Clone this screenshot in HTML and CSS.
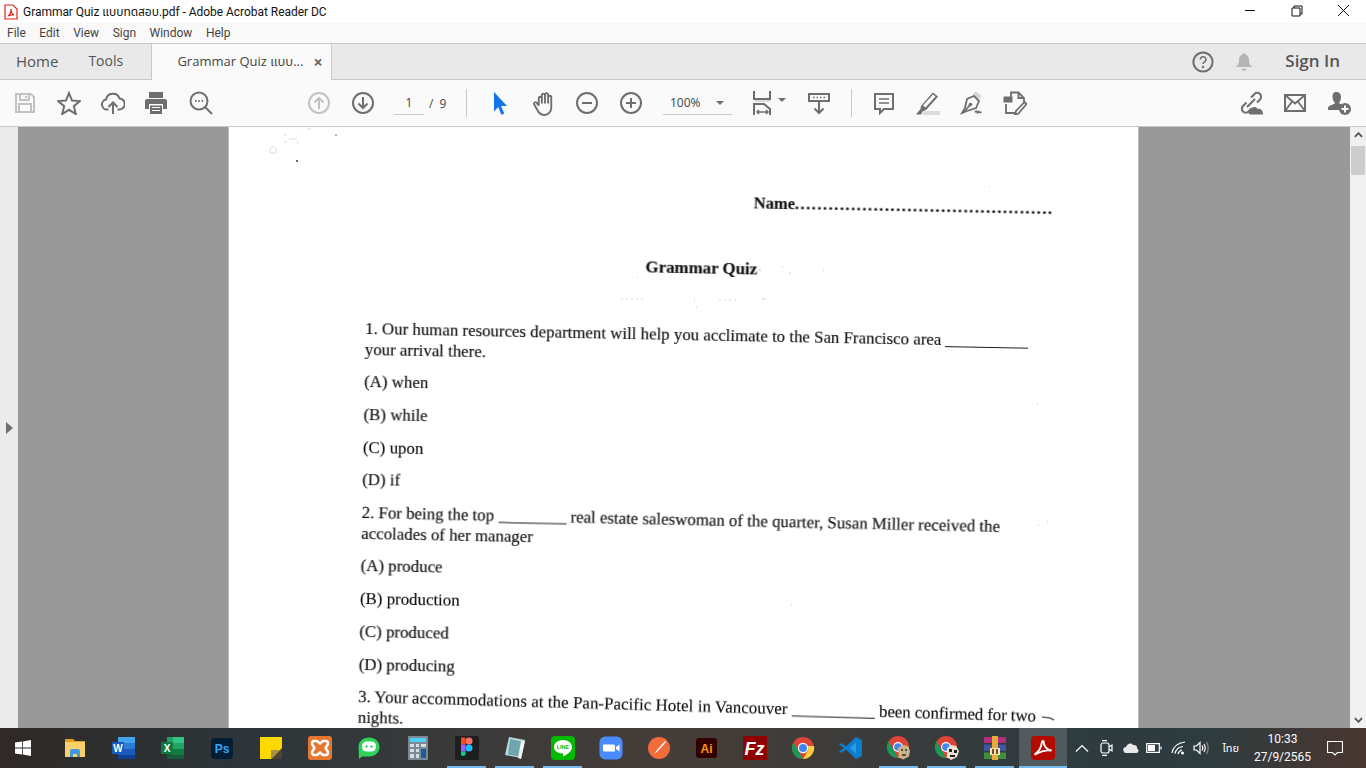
FILE: index.html
```html
<!DOCTYPE html>
<html lang="en">
<head>
<meta charset="utf-8">
<title>Grammar Quiz</title>
<link rel="stylesheet" href="styles.css">
</head>
<body>
<div class="app">
  <header class="titlebar">
    <svg class="title-logo" viewBox="0 0 14 16"><path class="pdf-page" d="M1 1h8l4 4v10H1z"/><path class="pdf-mark" d="M4 12c2-1 3-4 3-7 0 3 1 5 3 6-2-.5-4 0-6 1z"/></svg>
    <span class="title-text">Grammar Quiz <span lang="th" class="thai">แบบทดสอบ</span>.pdf - Adobe Acrobat Reader DC</span>
    <div class="winctl">
      <svg class="wbtn" viewBox="0 0 46 23"><path d="M17 10.500h10"/></svg>
      <svg class="wbtn" viewBox="0 0 46 23"><path d="M18 8h8v8h-8zM20 8V6h8v8h-2"/></svg>
      <svg class="wbtn" viewBox="0 0 46 23"><path d="M18 5l11 11M29 5L18 16"/></svg>
    </div>
  </header>
  <nav class="menubar">
    <span>File</span><span>Edit</span><span>View</span><span>Sign</span><span>Window</span><span>Help</span>
  </nav>
  <div class="tabbar">
    <span class="tab-link tab-home">Home</span>
    <span class="tab-link tab-tools">Tools</span>
    <div class="tab-doc"><span class="tab-doc-name">Grammar Quiz <span lang="th" class="thai">แบบ</span>...</span><span class="tab-close">×</span></div>
    <svg class="top-ic ic" viewBox="0 0 24 24"><circle cx="12" cy="12" r="9.600"/><path class="thin" d="M9.300 9.500a2.800 2.800 0 1 1 4.200 2.400c-1 .6-1.500 1.100-1.500 2.100"/><circle class="dot" cx="12" cy="17" r="1.200"/></svg>
    <svg class="top-bell" viewBox="0 0 24 24"><path d="M12 1.500c1 0 1.600.7 1.600 1.500 3 .8 4.400 3.300 4.400 6.500 0 4 1 6.500 4 8.500H2c3-2 4-4.500 4-8.500 0-3.200 1.400-5.700 4.400-6.500 0-.8.6-1.500 1.600-1.500z"/><path d="M9 20h6a3 2.500 0 0 1-6 0z"/></svg>
    <span class="signin">Sign In</span>
  </div>
  <div class="toolbar">
    <div class="tbtn"><svg class="ic off" viewBox="0 0 24 24"><path d="M3 3h15l3 3v15H3z"/><path d="M7 3v6h9V3M13 5v2M6 21v-8h12v8"/></svg></div>
    <div class="tbtn"><svg class="ic" viewBox="0 0 24 24"><path d="M12 2l3 7.500 8 .6-6.200 5.100 2 7.800L12 18.800 5.200 23l2-7.800L1 10.100l8-.6z"/></svg></div>
    <div class="tbtn"><svg class="ic" viewBox="0 0 24 24"><path d="M7.500 18.500H6a5 5 0 0 1-1-9.900A7 7 0 0 1 18.500 7.500a5.500 5.500 0 0 1-.5 11h-1.500"/><path d="M12 23V11.500M7.500 16l4.500-4.500 4.500 4.500"/></svg></div>
    <div class="tbtn shift-l"><svg class="solid" viewBox="0 0 24 24"><path d="M5 1h14v6H5z"/><path d="M3 8h18a2 2 0 0 1 2 2v8h-4v-5H5v5H1v-8a2 2 0 0 1 2-2z"/><path d="M6 14.500h12V23H6zM8 17h8v-1H8zM8 20h8v-1H8z" fill-rule="evenodd"/></svg></div>
    <div class="tbtn shift-r"><svg class="ic" viewBox="0 0 24 24"><circle cx="10" cy="10" r="8.500"/><path d="M16 16l7 7"/><path class="thick-dots" d="M6 10h1.500M9.300 10h1.500M12.600 10h1.500"/></svg></div>
    <div class="tbtn nav-first"><svg class="ic off" viewBox="0 0 24 24"><circle cx="12" cy="12" r="10"/><path d="M12 18V7M7.500 11.500L12 7l4.500 4.500"/></svg></div>
    <div class="tbtn"><svg class="ic" viewBox="0 0 24 24"><circle cx="12" cy="12" r="10"/><path d="M12 6v11M7.500 12.500L12 17l4.500-4.500"/></svg></div>
    <div class="pagebox">1</div>
    <div class="pagecount">/ 9</div>
    <div class="sep sep-a"></div>
    <div class="tbtn"><svg class="blue" viewBox="0 0 24 24"><path d="M6 1l13 14h-6l3.300 7.500-3 1.300L10.300 16 6 20.500z"/></svg></div>
    <div class="tbtn"><svg class="ic ic-hand" viewBox="0 0 24 24"><path class="mid" d="M6.500 14V7a1.500 1.500 0 0 1 3 0v5M9.500 12V4a1.500 1.500 0 0 1 3 0v8M12.500 12V3.500a1.500 1.500 0 0 1 3 0V12M15.500 12V6a1.500 1.500 0 0 1 3 0v10c0 4-3 7-6.500 7-3.300 0-5.500-1.800-7-5l-3-5.300c-.7-1.400 1.300-2.700 2.400-1.500L6.500 14"/></svg></div>
    <div class="tbtn pull-l"><svg class="ic" viewBox="0 0 24 24"><circle cx="12" cy="12" r="10"/><path d="M7 12h10"/></svg></div>
    <div class="tbtn"><svg class="ic" viewBox="0 0 24 24"><circle cx="12" cy="12" r="10"/><path d="M7 12h10M12 7v10"/></svg></div>
    <div class="zoombox"><span>100%</span><i class="caret"></i></div>
    <div class="tbtn fit"><svg class="ic" viewBox="0 0 24 24"><path d="M3 0v8h16V0"/><path class="band" d="M4 9h15v2H4z"/><path d="M3 24V13h10l6 5v6"/><path class="thin" d="M6 21h11M8 19l-2 2 2 2M15 19l2 2-2 2"/></svg><i class="caret caret-fit"></i></div>
    <div class="tbtn read"><svg class="ic" viewBox="0 0 24 24"><path d="M2 3h20v7H2z"/><path class="thin" d="M6 6.500h1.500M9.500 6.500H11M13 6.500h1.500M16.500 6.500H18"/><path d="M12 10v12M7.500 17.500L12 22l4.500-4.500"/></svg></div>
    <div class="sep sep-b"></div>
    <div class="tbtn"><svg class="ic" viewBox="0 0 24 24"><path d="M3 3h18v15H12l-4 4v-4H3z"/><path class="thin" d="M7 8h10M7 12h10"/></svg></div>
    <div class="tbtn"><svg class="solid" viewBox="0 0 24 24"><path class="pale" d="M7 20h17v4H7z"/><path d="M17 1.500l5 4-2 2.500-10 11-3 1-2 3.500H0l4.500-5.500.5-3L15 3.500z"/><path class="hole" d="M17 3.500l2.500 2-10 11-2.500-2z"/></svg></div>
    <div class="tbtn"><svg class="ic" viewBox="0 0 24 24"><path class="band-line" d="M14 2l6 5"/><path class="mid" d="M14 5l5 5-3 7-9 3-5 2 3-5 2-9z"/><path class="mid" d="M3 22l7-8"/><circle class="dot" cx="10.500" cy="13.500" r="1.800"/><path class="thin" d="M15 21.500c1-2 2-2 2-.5s1 1 1.500-.2.800.8 1.200.7 1-.5 2 0"/></svg></div>
    <div class="tbtn pull-l"><svg class="ic" viewBox="0 0 24 24"><path class="mid" d="M8 6V1.500h7.500L21 7v4M15.500 1.500V7H21M3 13v9h9"/><path class="fillblk" d="M.5 5.500h9v6h-9z"/><path class="mid" d="M21.500 11l2 2-8 9.500-3.500 1 1-3.500z"/></svg></div>
    <div class="toolbar-right">
      <div class="tbtn"><svg class="ic" viewBox="0 0 24 24"><path d="M7.500 11.500L4 15a3.800 3.800 0 0 0 5.500 5.500l3-3M12 6.500L15.500 3A3.800 3.800 0 0 1 21 8.500l-3 3M8 16l8-8"/><path class="fillblk" d="M11.500 23.500c-2.500 0-3-3.500 0-4.500.5-3 5.500-4.500 7-1 3.500-1 5.500 2 5.500 5.500z"/></svg></div>
      <div class="tbtn"><svg class="ic" viewBox="0 0 24 24"><path d="M2 4h20v16H2z"/><path class="mid" d="M2 4l10 8.500L22 4M2 20l7.500-10M22 20l-7.500-10"/></svg></div>
      <div class="tbtn"><svg class="solid" viewBox="0 0 24 24"><path d="M9.500 1c3 0 4.500 2.300 4.500 5s-1.200 4.500-1.700 5.500v1c1.500.6 2.700 1 3.700 1.500a7 7 0 0 0-3 5H1v-2.500c1-2 5-3 6.800-4v-1C7 11 5.500 9 5.500 6S6.500 1 9.500 1z"/><circle cx="18" cy="18" r="6"/><path class="hole" d="M17 14.500h2V17h2.500v2H19v2.500h-2V19h-2.500v-2H17z"/></svg></div>
    </div>
  </div>
  <main class="workspace">
    <aside class="sidepanel"><i class="side-arrow"></i></aside>
    <div class="canvas">
      <article class="page">
        <svg class="specks" viewBox="0 0 910 601"><circle class="sp-dark" cx="68" cy="34" r="1"/><circle class="sp-dark" cx="107" cy="8" r=".7"/><path class="sp-light" d="M41 22l3-3 3 3v4h-6zM55 8h3M55 15h3M60 12h8M69 14v3M69 5h1M78 2h4"/><path class="sp-mid" d="M408 150h1M529 143h3M553 140h1M560 146h2M594 143h1M465 172h1M533 172h3M465 175h1M467 180h1M808 277h1M562 478h1M818 395h1M760 60h1M809 398h1"/><path class="sp-faint" d="M392 172h24M490 173h20"/><path class="sp-dark-line" d="M813 590l8 1 4 2"/></svg>
        <div class="sheet">
          <p class="name-line"><b>Name</b><b class="dots">..............................................</b></p>
          <h1 class="quiz-title">Grammar Quiz</h1>
          <p class="ln first">1. Our human resources department will help you acclimate to the San Francisco area <i class="blank b1"></i></p>
          <p class="ln">your arrival there.</p>
          <p class="opt">(A) when</p>
          <p class="opt">(B) while</p>
          <p class="opt">(C) upon</p>
          <p class="opt">(D) if</p>
          <p class="ln q q2">2. For being the top <i class="blank b2"></i> real estate saleswoman of the quarter, Susan Miller received the</p>
          <p class="ln">accolades of her manager</p>
          <p class="opt">(A) produce</p>
          <p class="opt">(B) production</p>
          <p class="opt">(C) produced</p>
          <p class="opt">(D) producing</p>
          <p class="ln q q3">3. Your accommodations at the Pan-Pacific Hotel in Vancouver <i class="blank b1"></i> <span class="q3-tail">been confirmed for two</span></p>
          <p class="ln">nights.</p>
        </div>
      </article>
    </div>
    <div class="scrollbar">
      <svg class="sb-arrow" viewBox="0 0 10 6"><path d="M1 5l4-4 4 4"/></svg>
      <div class="sb-thumb"></div>
      <svg class="sb-arrow sb-down" viewBox="0 0 10 6"><path d="M1 1l4 4 4-4"/></svg>
    </div>
  </main>
  <footer class="taskbar">
    <div class="start"><svg class="win" viewBox="0 0 16 16"><path d="M0 2.600l7-1v6H0zM7.800 1.400L16 0v7.600H7.800zM0 8.400h7v6l-7-1zM7.800 8.400H16V16l-8.200-1.400z"/></svg></div>
    <div class="apps">
      <div class="app-btn"><svg class="ti" viewBox="0 0 24 24"><path fill="#e0a11c" d="M2 3h8l2 2h10v4H2z"/><path fill="#f8cf6a" d="M2 6h20v15H2z"/><path fill="#3f9be0" d="M7 21v-6a2 2 0 0 1 2-2h6a2 2 0 0 1 2 2v6h-3v-3h-4v3z"/></svg></div>
      <div class="app-btn"><svg class="ti" viewBox="0 0 24 24"><path fill="#41a5ee" d="M6 1h17v6H6z"/><path fill="#2b7cd3" d="M6 7h17v6H6z"/><path fill="#185abd" d="M6 13h17v6H6z"/><path fill="#103f91" d="M6 19h17v4H6z"/><rect fill="#185abd" x="0" y="6" width="12" height="12"/><text class="tt tt-w" x="6" y="15.500">W</text></svg></div>
      <div class="app-btn"><svg class="ti" viewBox="0 0 24 24"><path fill="#33c481" d="M12 1h11v6H12z"/><path fill="#21a366" d="M6 1h6v6H6zM12 7h11v6H12z"/><path fill="#107c41" d="M6 7h6v6H6zM12 13h11v6H12z"/><path fill="#185c37" d="M6 13h6v10H6zM12 19h11v4H12z"/><rect fill="#0f7b3f" x="0" y="6" width="12" height="12"/><text class="tt tt-w" x="6" y="15.500">X</text></svg></div>
      <div class="app-btn"><svg class="ti" viewBox="0 0 24 24"><rect fill="#001e36" x="1" y="2" width="22" height="21" rx="4"/><text class="tt tt-ps" x="12" y="17">Ps</text></svg></div>
      <div class="app-btn"><svg class="ti" viewBox="0 0 24 24"><path fill="#ffd800" d="M1 1h22v22H1z"/><path fill="#4b4438" d="M12 23L23 12v11z"/><path fill="#a8924a" d="M12 23v-9h9z"/></svg></div>
      <div class="app-btn"><svg class="ti" viewBox="0 0 24 24"><rect fill="#e5772f" x="0" y="0" width="24" height="24" rx="3"/><path fill="none" stroke="#fff" stroke-width="2.400" stroke-linejoin="round" d="M6 5h3l3 2.500L15 5h3c2 0 2 2 2 3l-2.500 4 2.500 4c0 1 0 3-2 3h-3l-3-2.500L9 19H6c-2 0-2-2-2-3l2.500-4L4 8c0-1 0-3 2-3z"/></svg></div>
      <div class="app-btn"><svg class="ti" viewBox="0 0 24 24"><path fill="#2fd35a" d="M12 1.500c6 0 10.500 4 10.500 9.500S18 20.500 12 20.500H5L2 23l-.5-12C1.500 5.500 6 1.500 12 1.500z"/><rect fill="#fff" x="5" y="5.500" width="14" height="10" rx="4.500"/><circle fill="#2fd35a" cx="9.500" cy="10.500" r="1.200"/><circle fill="#2fd35a" cx="14.500" cy="10.500" r="1.200"/></svg></div>
      <div class="app-btn"><svg class="ti" viewBox="0 0 24 24"><rect fill="#7b8a96" x="2" y="0" width="20" height="24" rx="1"/><path fill="#4fd0f2" d="M4 2h16v4H4z"/><path fill="#d6dde3" d="M4 8h4v3H4zM10 8h3v3h-3zM15 8h5v3h-5zM4 13h4v3H4zM10 13h3v3h-3zM4 18h4v4H4zM10 18h3v4h-3z"/><path fill="#1c5c9c" d="M15 13h5v9h-5z"/></svg></div>
      <div class="app-btn underlined"><svg class="ti" viewBox="0 0 24 24"><rect fill="#1e1e1e" x="0" y="0" width="24" height="24" rx="2"/><circle fill="#ff7262" cx="14" cy="5" r="3.500"/><path fill="#f24e1e" d="M6 1.500h4.500v7H6z"/><circle fill="#1abcfe" cx="14" cy="12" r="3.500"/><path fill="#a259ff" d="M6 8.500h4.500v7H6z"/><path fill="#0acf83" d="M6 15.500h4.500v3.500a3.500 3.500 0 0 1-4.500 0z"/></svg></div>
      <div class="app-btn underlined"><svg class="ti" viewBox="0 0 24 24"><path fill="#b9dbe0" d="M6 1l16 3-4 18L2 19z"/><path fill="#6fa6ad" d="M7 3l12 2.500-3 15-11-2z"/><path fill="#eef6f4" d="M18 5l4 0-4 18-3-1z"/></svg></div>
      <div class="app-btn underlined"><svg class="ti" viewBox="0 0 24 24"><rect fill="#00b900" width="24" height="24" rx="4"/><path fill="#fff" d="M12 4c5 0 9 3 9 7.200 0 4-5 7.500-9 9.300v-3C7 17.500 3 14.800 3 11.200 3 7 7 4 12 4z"/><text class="tt tt-line" x="12" y="13">LINE</text></svg></div>
      <div class="app-btn"><svg class="ti" viewBox="0 0 24 24"><rect fill="#4a8cff" width="23" height="23" x=".5" y=".5" rx="6"/><path fill="#fff" d="M4 8.500h10.500a1.500 1.500 0 0 1 1.500 1.500v5.500H5.500A1.500 1.500 0 0 1 4 14zM17 11l3.500-2.500v7L17 13z"/></svg></div>
      <div class="app-btn"><svg class="ti" viewBox="0 0 24 24"><circle fill="#f26b3a" cx="12" cy="12" r="11"/><path fill="#fff" d="M18 5l1 1-8 9-4 3.500 3-4.500z"/></svg></div>
      <div class="app-btn"><svg class="ti" viewBox="0 0 24 24"><rect fill="#330000" x="1" y="2" width="21" height="20" rx="3"/><text class="tt tt-ai" x="11.500" y="16.500">Ai</text></svg></div>
      <div class="app-btn"><svg class="ti" viewBox="0 0 24 24"><rect fill="#8f0000" width="24" height="24"/><text class="tt tt-fz" x="11.500" y="19">Fz</text></svg></div>
      <div class="app-btn"><svg class="ti" viewBox="0 0 24 24"><circle fill="#db4437" cx="12" cy="12" r="11"/><path fill="#0f9d58" d="M12 23A11 11 0 0 1 2.500 6.500L8 16z"/><path fill="#ffcd40" d="M12 23l5.500-9.500-2-3.500H23a11 11 0 0 1-11 13z"/><circle fill="#fff" cx="12" cy="12" r="5.200"/><circle fill="#4285f4" cx="12" cy="12" r="4"/></svg></div>
      <div class="app-btn"><svg class="ti" viewBox="0 0 24 24"><path fill="#0a7fd0" d="M17 1l6 3v16l-6 3L7 13.500 2.500 17 0 15.500 5 12 0 8.500 2.500 7 7 10.500z"/><path fill="#27a0ea" d="M17 6.500L11 12l6 5.500z"/></svg></div>
      <div class="app-btn underlined"><svg class="ti" viewBox="0 0 24 24"><circle fill="#db4437" cx="11" cy="11" r="11"/><path fill="#0f9d58" d="M11 22A11 11 0 0 1 1.500 5.500L7 15z"/><path fill="#ffcd40" d="M11 22l5-9 6-2a11 11 0 0 1-11 11z"/><circle fill="#fff" cx="11" cy="11" r="5"/><circle fill="#4285f4" cx="11" cy="11" r="3.800"/><path fill="#c9b38e" d="M11 12l4-3 5 .5 3 5-1 6-6 3-4-2z"/><path fill="#5e4d38" d="M14 13h2v2h-2zM18 13h2v2h-2zM15 18h4v2h-4z"/></svg></div>
      <div class="app-btn underlined"><svg class="ti" viewBox="0 0 24 24"><circle fill="#db4437" cx="11" cy="11" r="11"/><path fill="#0f9d58" d="M11 22A11 11 0 0 1 1.500 5.500L7 15z"/><path fill="#ffcd40" d="M11 22l5-9 6-2a11 11 0 0 1-11 11z"/><circle fill="#fff" cx="11" cy="11" r="5"/><circle fill="#4285f4" cx="11" cy="11" r="3.800"/><path fill="#e8e2d4" d="M12 12l4-3 5 1 3 5-2 6-6 3-4-3z"/><path fill="#22201c" d="M14 13h3v3h-3zM19 14h3v3h-3zM15 19h5v2h-5z"/></svg></div>
      <div class="app-btn underlined"><svg class="ti" viewBox="0 0 24 24"><path fill="#b52d7f" d="M1 1h22v6H1z"/><path fill="#43559f" d="M1 8.500h22V15H1z"/><path fill="#3f8f3f" d="M1 16.500h22V23H1z"/><path fill="#e6a93a" d="M9 0h6v24H9z"/><path fill="#f4e3b5" d="M7 12h10v7H7z"/><path fill="#7a4a20" d="M9 13h2v5H9zM13 13h2v5h-2z"/></svg></div>
      <div class="app-btn underlined active"><svg class="ti" viewBox="0 0 24 24"><rect fill="#b30b00" width="24" height="24" rx="4" x="0" y="0"/><path fill="none" stroke="#fff" stroke-width="1.800" stroke-linejoin="round" d="M4 18c3-1.500 6-6 7-12 .2-1.500 1.800-1.500 1.700 0-.2 4 3 7.500 7.300 8.500-4-.6-9 .3-13 2.500-1.600 1.100-3 1.800-3 1z"/></svg></div>
    </div>
    <div class="tray">
      <svg class="tr tr-chev" viewBox="0 0 14 8"><path d="M1 7.500L7 1.500l6 6"/></svg>
      <svg class="tr tr-meet" viewBox="0 0 14 16"><path d="M2 5a2 2 0 0 1 2-2h4a2 2 0 0 1 2 2v6a2 2 0 0 1-2 2H4a2 2 0 0 1-2-2zM10 7l3-2v6l-3-2M3 .7h5M3 15.300h5"/></svg>
      <svg class="tr-fill tr-cloud" viewBox="0 0 16 10"><path d="M3.500 10a3 3 0 0 1-.5-6C4 1 8-1 10 2c3-.5 4.500 1.500 4 3.500 2 .5 2 4.500-.5 4.500z"/></svg>
      <svg class="tr tr-bat" viewBox="0 0 16 10"><path d="M.7.700h12.600v8.600H.7zM15 3.500v3"/><path class="tr-full" d="M2 2h7v6H2z"/></svg>
      <svg class="tr tr-wifi" viewBox="0 0 16 14"><path d="M1 12C2 6 7 2 14 1M4 12.500c.8-3.500 4-6.500 8-7M7 13c.5-1.800 2-3.400 4-3.800"/><circle class="tr-full" cx="11.500" cy="12" r="1.500"/></svg>
      <svg class="tr tr-vol" viewBox="0 0 16 14"><path d="M1 5h2.500L7 1.500v11L3.500 9H1zM9 4.500c1 1.500 1 3.500 0 5M11 3c1.500 2.500 1.500 5.500 0 8"/><path class="tr-dim" d="M13.500 1c2 3.500 2 8.500 0 12"/></svg>
      <span class="lang" lang="th">ไทย</span>
      <div class="clock"><span>10:33</span><span>27/9/2565</span></div>
      <svg class="tr tr-note" viewBox="0 0 16 15"><path d="M.5.500h15v11h-5L8 14l-2.500-2.500h-5z"/></svg>
    </div>
  </footer>
</div>
</body>
</html>
```

FILE: styles.css
```css
* { box-sizing: border-box; }
html, body { margin: 0; padding: 0; height: 100%; overflow: hidden; }
body { font-family: "Roboto", "Noto Sans", "DejaVu Sans", sans-serif; color: #333; }
p, h1 { margin: 0; }
.app { display: flex; flex-direction: column; width: 1366px; height: 768px; }

.titlebar { height: 23px; flex: none; display: flex; align-items: center; background: #fff; padding-left: 4px; font-size: 12px; color: #111; }
.title-logo { width: 14px; height: 16px; margin-right: 5px; flex: none; }
.pdf-page { fill: #fff; stroke: #e2231a; stroke-width: 1.200; }
.pdf-mark { fill: none; stroke: #e2231a; stroke-width: 1.200; }
.title-text { white-space: nowrap; letter-spacing: -.04px; }
.thai { font-family: "Noto Sans Thai", "Noto Sans Thai Looped", "Tahoma", "Garuda", "Loma", "DejaVu Sans", sans-serif; }
.winctl { margin-left: auto; display: flex; }
.wbtn { width: 46px; height: 23px; fill: none; stroke: #111; stroke-width: 1; }

.menubar { height: 20px; flex: none; display: flex; align-items: center; gap: 13.500px; padding-left: 7px; background: #f9f9f9; font-size: 12px; color: #444; }

.tabbar { height: 37px; flex: none; display: flex; align-items: center; background: #e9e9e9; border-top: 1px solid #c9c9c9; border-bottom: 1px solid #c9c9c9; font-family: "Open Sans", sans-serif; font-size: 15px; color: #555; }
.tab-link { white-space: nowrap; margin-bottom: 2px; }
.tab-home { margin-left: 16px; }
.tab-tools { margin-left: 30px; width: 63px; font-size: 14px; }
.tab-doc { align-self: stretch; width: 181px; margin-bottom: -1px; display: flex; align-items: center; padding-left: 25px; background: #fafafa; border-left: 1px solid #c9c9c9; border-right: 1px solid #c9c9c9; font-size: 13px; color: #444; white-space: nowrap; }
.tab-close { margin-left: 10px; font-size: 16px; font-weight: 700; color: #666; }
.top-ic { width: 24px; height: 24px; margin-left: auto; }
.top-bell { width: 20px; height: 22px; margin-left: 19px; fill: #b4b4b4; }
.signin { margin-left: 31px; margin-right: 26px; font-size: 17px; font-weight: 600; color: #555; position: relative; top: -1px; }

.toolbar { height: 47px; flex: none; display: flex; align-items: center; padding-left: 3px; padding-right: 5px; background: #fafafa; border-bottom: 1px solid #c9c9c9; font-family: "Open Sans", sans-serif; }
.tbtn { width: 44px; flex: none; display: flex; justify-content: center; align-items: center; color: #6e6e6e; position: relative; }
.shift-l { margin-left: -1px; }
.shift-r { margin-left: 1px; }
.pull-l { margin-left: -1px; }
.ic, .solid, .blue { width: 24px; height: 24px; flex: none; }
.ic { fill: none; stroke: currentColor; stroke-width: 2; color: #6e6e6e; }
.ic.off { color: #c2c2c2; }
.ic-hand { width: 25px; height: 25px; }
.solid { fill: #6e6e6e; }
.blue { fill: #1473e6; }
.thin { stroke-width: 1.500; }
.thick-dots { stroke-width: 1.800; }
.mid { stroke-width: 1.800; }
.dot { fill: currentColor; stroke: none; }
.band { fill: #dcdcdc; stroke: none; }
.band-line { stroke: #d5d5d5; stroke-width: 5; }
.pale { fill: #dcdcdc; }
.hole { fill: #fafafa; }
.fillblk { fill: currentColor; stroke: none; }
.nav-first { margin-left: 74px; }
.pagebox { width: 30px; margin-left: 9px; height: 24px; display: flex; align-items: center; justify-content: center; border-bottom: 1px solid #c9c9c9; font-size: 12px; color: #444; }
.pagecount { width: 28px; padding-left: 5px; font-size: 12px; color: #444; word-spacing: 3px; white-space: nowrap; }
.sep { width: 1px; height: 28px; background: #c9c9c9; flex: none; }
.sep-a { margin-left: 14px; margin-right: 11px; }
.sep-b { margin-left: 10px; margin-right: 10px; }
.zoombox { width: 69px; height: 24px; margin-left: 10px; display: flex; align-items: center; justify-content: space-between; padding: 0 8px 0 7px; border-bottom: 1px solid #c9c9c9; font-size: 12px; color: #444; }
.caret { width: 0; height: 0; border-left: 4px solid transparent; border-right: 4px solid transparent; border-top: 4px solid #6e6e6e; }
.fit { margin-left: 9px; }
.caret-fit { position: absolute; left: 37px; top: 7px; }
.read { margin-left: 12px; }
.toolbar-right { margin-left: auto; display: flex; }

.workspace { flex: 1; min-height: 0; display: flex; }
.sidepanel { width: 18px; flex: none; background: #ebebeb; display: flex; align-items: center; justify-content: flex-start; padding-left: 6px; }
.side-arrow { width: 0; height: 0; border-top: 6px solid transparent; border-bottom: 6px solid transparent; border-left: 7px solid #707070; }
.canvas { flex: 1; min-width: 0; background: #999; padding-left: 211px; }
.page { position: relative; width: 909px; height: 100%; overflow: hidden; background: #fff; box-shadow: -1px 0 0 #bdbdbd, 1px 0 0 #bdbdbd; }
.specks { position: absolute; left: 0; top: 0; width: 910px; height: 601px; }
.sp-dark { fill: #333; }
.sp-light { fill: none; stroke: #dcdcdc; stroke-width: 1; }
.sp-mid { fill: none; stroke: #c9c9c9; stroke-width: 1; }
.sp-faint { fill: none; stroke: #d8d8d8; stroke-width: 1; stroke-dasharray: 2 3; }
.sp-dark-line { fill: none; stroke: #666; stroke-width: 1.500; }

.sheet { width: 720px; margin-left: 139px; margin-top: 57.600px; transform: rotate(1.100deg); transform-origin: 0 0; font-family: "Liberation Serif", "Times New Roman", serif; color: #111; font-size: 16.850px; -webkit-text-stroke: .15px #111; filter: blur(.25px); }
.name-line { height: 22px; line-height: 22px; padding-left: 386px; font-size: 16.500px; white-space: nowrap; }
.dots { letter-spacing: 1.500px; }
.quiz-title { height: 22px; line-height: 22px; margin-top: 44px; padding-left: 279px; font-size: 16.900px; font-weight: 700; white-space: nowrap; }
.ln { height: 21px; line-height: 21px; white-space: nowrap; }
.first { margin-top: 45px; }
.opt { height: 32.800px; line-height: 32.800px; white-space: nowrap; }
.ln + .opt { margin-top: 6px; }
.q { margin-top: 5px; }
.q2 { transform: rotate(.15deg); transform-origin: 0 50%; }
.q3 { letter-spacing: .07px; transform: rotate(.55deg); transform-origin: 0 50%; }
.q3-tail { letter-spacing: -.08px; }
.blank { display: inline-block; height: 1px; background: #1c1c1c; vertical-align: -2px; }
.b1 { width: 83px; }
.b2 { width: 68px; }

.scrollbar { width: 16px; flex: none; background: #f1f1f1; display: flex; flex-direction: column; align-items: center; position: relative; }
.sb-arrow { width: 9px; height: 6px; margin-top: 5px; fill: none; stroke: #505050; stroke-width: 2; }
.sb-thumb { width: 14px; height: 29px; margin-top: 8px; background: #cdcdcd; }
.sb-down { margin-top: auto; margin-bottom: 5px; }

.taskbar { height: 40px; flex: none; display: flex; align-items: center; background: linear-gradient(90deg, #2f2927 0%, #2d3539 18%, #37393a 30%, #463d38 50%, #3c3c3a 62%, #2e3b3f 78%, #2d3c40 88%, #4a3630 100%); color: #fff; }
.start { width: 50.500px; flex: none; display: flex; justify-content: center; align-items: center; padding-right: 5px; }
.win { width: 16px; height: 16px; fill: #fff; }
.apps { display: flex; height: 100%; flex: none; }
.app-btn { width: 48px; height: 100%; display: flex; align-items: center; justify-content: center; position: relative; }
.app-btn:nth-child(-n+8) { width: 49px; }
.ti { width: 24px; height: 24px; }
.underlined::after { content: ""; position: absolute; left: 4px; right: 5px; bottom: 0; height: 2px; background: #76b9ed; }
.active { background: rgba(255, 255, 255, .16); }
.active::after { left: 0; right: 0; }
.tt { font-family: "Liberation Sans", sans-serif; font-weight: 700; text-anchor: middle; }
.tt-w { font-size: 10px; fill: #fff; }
.tt-ps { font-size: 12px; fill: #31a8ff; }
.tt-ai { font-size: 12px; fill: #ff9a00; }
.tt-fz { font-size: 18px; fill: #fff; font-style: italic; }
.tt-line { font-size: 5.500px; fill: #00b900; }

.tray { flex: 1; display: flex; align-items: center; height: 100%; padding-left: 8px; }
.tr { fill: none; stroke: #fff; stroke-width: 1.200; flex: none; }
.tr-fill { fill: #e8e8e8; flex: none; }
.tr-full { fill: #fff; stroke: none; }
.tr-dim { stroke: #8b8b8b; }
.tr-chev { width: 14px; height: 8px; }
.tr-meet { width: 14px; height: 16px; margin-left: 10px; }
.tr-cloud { width: 16px; height: 10px; margin-left: 10px; }
.tr-bat { width: 16px; height: 10px; margin-left: 7px; }
.tr-wifi { width: 16px; height: 14px; margin-left: 9px; }
.tr-vol { width: 16px; height: 14px; margin-left: 6px; }
.lang { margin-left: 14px; font-size: 11px; width: 22px; flex: none; white-space: nowrap; font-family: "Noto Sans Thai", "Tahoma", "DejaVu Sans", sans-serif; }
.clock { width: 76px; flex: none; display: flex; flex-direction: column; align-items: center; font-size: 12px; line-height: 18px; white-space: nowrap; }
.tr-note { width: 16px; height: 15px; margin-left: 6px; }
```
